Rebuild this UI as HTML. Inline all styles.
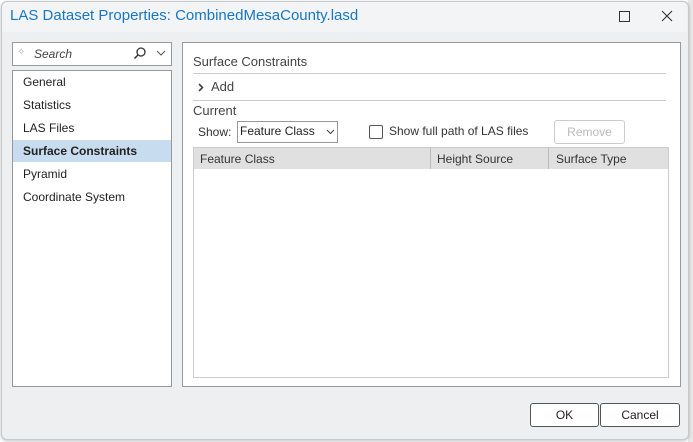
<!DOCTYPE html>
<html><head><style>
body{margin:0;width:693px;height:442px;background:#fff;position:relative;overflow:hidden;font-family:"Segoe UI","Liberation Sans",sans-serif;font-size:12px;color:#222}
.a{position:absolute}
.win{left:1px;top:1px;width:686px;height:437px;background:#eeeff1;border:1px solid #c8c8c8;border-radius:6px;box-shadow:0 1px 3px rgba(0,0,0,.25)}
</style></head><body>
<div class="a" style="left:688px;top:0;width:5px;height:442px;background:#e8e8e8"></div>
<div class="a win"></div>
<div class="a" style="left:2px;top:2px;width:685px;height:30px;background:#f3f4f6;border-radius:6px 6px 0 0"></div>
<div class="a" style="left:10px;top:7px;font-size:15px;color:#1877c4">LAS Dataset Properties: CombinedMesaCounty.lasd</div>
<div class="a" style="left:619px;top:11px;width:9px;height:9px;border:1px solid #333"></div>
<svg class="a" style="left:661px;top:10px" width="12" height="12"><path d="M1 1 L11 11 M11 1 L1 11" stroke="#333" stroke-width="1.1"/></svg>
<div class="a" style="left:12px;top:42px;width:158px;height:22px;background:#fff;border:1px solid #999"></div>
<div class="a" style="left:17px;top:47px;font-size:10px;color:#aaa">✧</div>
<div class="a" style="left:34px;top:47px;font-style:italic;color:#444">Search</div>
<svg class="a" style="left:133px;top:46px" width="14" height="14"><circle cx="8" cy="6" r="4" fill="none" stroke="#333" stroke-width="1.3"/><path d="M5 9 L1.5 12.5" stroke="#333" stroke-width="1.5"/></svg>
<svg class="a" style="left:156px;top:50px" width="10" height="6"><path d="M1 1 L5 5 L9 1" fill="none" stroke="#555"/></svg>
<div class="a" style="left:12px;top:70px;width:158px;height:315px;background:#fff;border:1px solid #999"></div>
<div class="a" style="left:13px;top:140px;width:158px;height:22px;background:#c7dcee"></div>
<div class="a" style="left:23px;top:71px;line-height:23px">General<br>Statistics<br>LAS Files<br><b>Surface Constraints</b><br>Pyramid<br>Coordinate System</div>
<div class="a" style="left:182px;top:42px;width:497px;height:343px;background:#fff;border:1px solid #999"></div>
<div class="a" style="left:193px;top:54px;font-size:13px;color:#444">Surface Constraints</div>
<div class="a" style="left:193px;top:73px;width:473px;height:1px;background:#ccc"></div>
<svg class="a" style="left:198px;top:83px" width="6" height="9"><path d="M1 1 L4.5 4.5 L1 8" fill="none" stroke="#444" stroke-width="1.6"/></svg>
<div class="a" style="left:211px;top:79px;font-size:13px;color:#444">Add</div>
<div class="a" style="left:193px;top:100px;width:473px;height:1px;background:#ccc"></div>
<div class="a" style="left:193px;top:103px;font-size:13px;color:#444">Current</div>
<div class="a" style="left:198px;top:125px;color:#333">Show:</div>
<div class="a" style="left:237px;top:121px;width:99px;height:20px;background:#fff;border:1px solid #999"></div>
<div class="a" style="left:240px;top:124px;color:#222">Feature Class</div>
<svg class="a" style="left:326px;top:129px" width="9" height="6"><path d="M1 1 L4.5 4.5 L8 1" fill="none" stroke="#444"/></svg>
<div class="a" style="left:369px;top:125px;width:12px;height:12px;border:1px solid #555;border-radius:2px;background:#fff"></div>
<div class="a" style="left:389px;top:124px;color:#333">Show full path of LAS files</div>
<div class="a" style="left:554px;top:120px;width:69px;height:22px;border:1px solid #ccc;border-radius:3px;background:#fff;color:#bbb;text-align:center;line-height:22px">Remove</div>
<div class="a" style="left:193px;top:147px;width:474px;height:229px;border:1px solid #ccc;background:#fff"></div>
<div class="a" style="left:194px;top:148px;width:474px;height:21px;background:#e0e0e0"></div>
<div class="a" style="left:430px;top:148px;width:1px;height:21px;background:#bbb"></div>
<div class="a" style="left:548px;top:148px;width:1px;height:21px;background:#bbb"></div>
<div class="a" style="left:200px;top:152px;color:#333">Feature Class</div>
<div class="a" style="left:437px;top:152px;color:#333">Height Source</div>
<div class="a" style="left:556px;top:152px;color:#333">Surface Type</div>
<div class="a" style="left:530px;top:403px;width:67px;height:22px;border:1px solid #555;border-radius:3px;background:#fff;text-align:center;line-height:22px">OK</div>
<div class="a" style="left:600px;top:403px;width:78px;height:22px;border:1px solid #555;border-radius:3px;background:#fff;text-align:center;line-height:22px">Cancel</div>
</body></html>
